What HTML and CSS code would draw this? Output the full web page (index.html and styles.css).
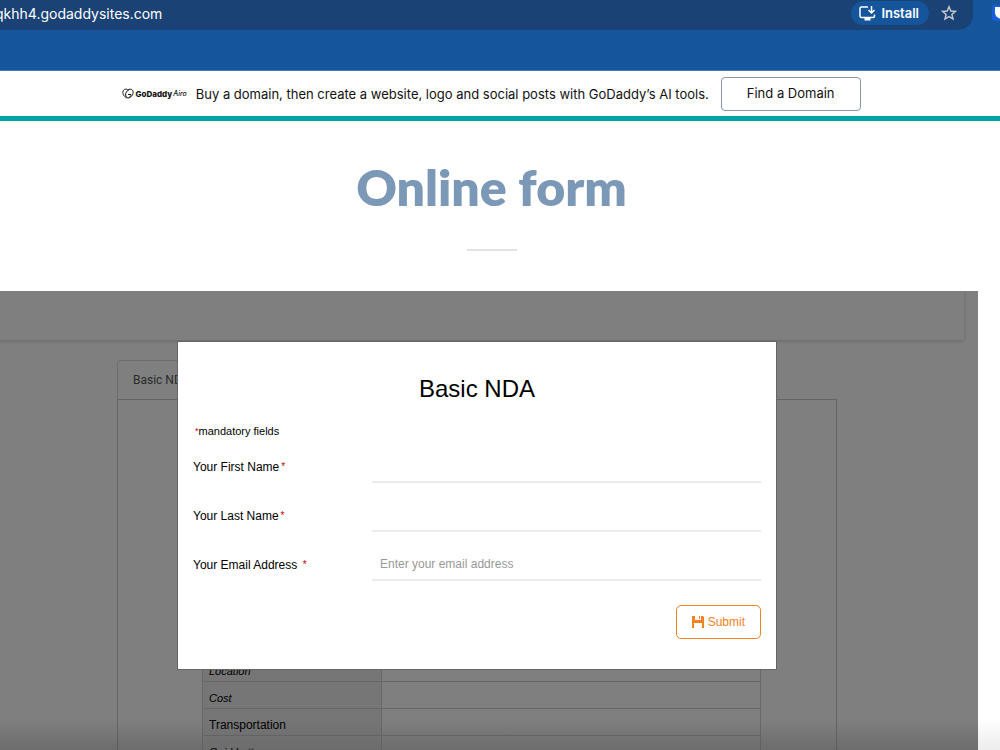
FILE: index.html
```html
<!DOCTYPE html>
<html lang="en">
<head>
    <meta charset="UTF-8">
    <meta name="viewport" content="width=device-width, initial-scale=1.0">
    <title>Online form</title>
    <link rel="stylesheet" href="styles.css">
</head>
<body>
    <header class="browser">
        <div class="address-bar">
            <span class="url">qkhh4.godaddysites.com</span>
            <button class="install" type="button">
                <svg width="17" height="16" viewBox="0 0 17 16" fill="none" stroke="currentColor" stroke-width="1.5">
                    <path d="M9 2H2.500Q1 2 1 3.500V11q0 1.500 1.500 1.500h11.500q1.500 0 1.500-1.500V9.500"/>
                    <path d="M5.500 14h6" stroke-width="3"/>
                    <path d="M12.500 1v7M9.500 5l3 3 3-3"/>
                </svg>
                Install
            </button>
            <button class="star" type="button" aria-label="Bookmark">
                <svg width="16" height="16" viewBox="0 0 16 16" fill="none" stroke="currentColor" stroke-width="1.5">
                    <path d="M8 1.8l1.8 4.2 4.6.4-3.5 3 1.1 4.5L8 11.5l-4 2.4 1.1-4.5-3.500-3L6.200 6z"/>
                </svg>
            </button>
        </div>
        <svg class="extension" width="18" height="16" viewBox="0 0 18 16">
            <rect width="18" height="16" rx="3" fill="#175ddc"/>
            <path d="M3 2h12v6c0 3-3 5-6 6-3-1-6-3-6-6z" fill="#fff"/>
            <path d="M9 4h4v4c0 2-2 3-4 4z" fill="#175ddc"/>
        </svg>
    </header>

    <div class="banner">
        <div class="brand">
            <svg width="12" height="11" viewBox="0 0 24 22" fill="none" stroke="#111" stroke-width="2">
                <path d="M12 20C5 19 1 13 2 7c1-5 6-6 10-3 4-3 9-2 10 3 1 6-3 12-10 13z"/>
                <path d="M9 18C5 13 8 6 15 3M12 13h6c0 3-2 5-4 6"/>
            </svg>
            <span class="brand-name">GoDaddy</span>
            <span class="brand-airo">Airo</span>
        </div>
        <p class="banner-text">Buy a domain, then create a website, logo and social posts with GoDaddy’s AI tools.</p>
        <a class="banner-link" href="#">Find a Domain</a>
    </div>

    <div class="hero">
        <h1>Online form</h1>
        <hr>
    </div>

    <main class="embed">
        <div class="toolbar"></div>
        <div class="document">
            <div class="tab">Basic NDA</div>
            <div class="sheet">
                <table>
                    <tr><th class="italic">Location</th><td></td></tr>
                    <tr><th class="italic">Cost</th><td></td></tr>
                    <tr><th>Transportation</th><td></td></tr>
                    <tr><th class="italic">Guid Letter</th><td></td></tr>
                </table>
            </div>
        </div>
        <div class="overlay">
            <form class="modal">
                <h2>Basic NDA</h2>
                <p class="note"><span class="required">*</span>mandatory fields</p>
                <div class="field">
                    <label for="first">Your First Name<span class="required">*</span></label>
                    <input type="text" id="first">
                </div>
                <div class="field">
                    <label for="last">Your Last Name<span class="required">*</span></label>
                    <input type="text" id="last">
                </div>
                <div class="field">
                    <label for="email">Your Email Address <span class="required">*</span></label>
                    <input type="email" id="email" placeholder="Enter your email address">
                </div>
                <div class="actions">
                    <button class="submit" type="submit">
                        <svg width="12" height="12" viewBox="0 0 12 12" fill="currentColor">
                            <path d="M0 0h3v4h6V0h2l1 1v11h-2V7H2v5H0zM7 0h1v3H7z"/>
                        </svg>
                        Submit
                    </button>
                </div>
            </form>
        </div>
    </main>
</body>
</html>
```

FILE: styles.css
```css
* {
    box-sizing: border-box;
}
body {
    margin: 0;
    height: 100vh;
    display: flex;
    flex-direction: column;
    overflow: hidden;
    background: linear-gradient(to top, #ececec, #fff 30px);
    color: #000;
    font-family: "Liberation Sans", Arial, sans-serif;
}
button {
    font-family: inherit;
    cursor: pointer;
}

/* browser bar */
.browser {
    display: flex;
    align-items: flex-start;
    gap: 19px;
    height: 71px;
    flex-shrink: 0;
    background: #15559b;
    border-bottom: 1px solid #4a7ab3;
    overflow: hidden;
}
.address-bar {
    flex: 1;
    display: flex;
    align-items: center;
    gap: 12px;
    height: 30px;
    padding: 0 16px 4px 0;
    background: #1b4275;
    border-radius: 0 0 15px 0;
    color: #fff;
}
.url {
    flex: 1;
    margin-left: -5px;
    font: 14px Inter, sans-serif;
}
.install {
    display: flex;
    align-items: center;
    gap: 5px;
    height: 24px;
    padding: 0 10px 0 8px;
    border: 0;
    border-radius: 12px;
    background: #15559b;
    color: #fff;
    font: 600 13px Inter, sans-serif;
}
.star {
    display: flex;
    padding: 0;
    border: 0;
    background: none;
    color: #c3c7cc;
}
.extension {
    flex-shrink: 0;
    margin: 5px -10px 0 0;
}

/* GoDaddy banner */
.banner {
    display: flex;
    align-items: center;
    justify-content: center;
    flex-shrink: 0;
    height: 50px;
    padding-right: 17px;
    border-bottom: 5px solid #00a4a6;
    font-family: Inter, sans-serif;
    font-size: 13px;
    line-height: 18px;
    color: #111;
}
.brand {
    display: flex;
    align-items: center;
    gap: 1px;
    margin-right: 9px;
    font: 800 7px Inter, sans-serif;
}
.brand-name {
    font-size: 8px;
}
.brand-airo {
    font-style: italic;
    font-weight: 500;
}
.banner-text {
    margin: 0 12px 0 0;
}
.banner-link {
    padding: 6px 25px 8px;
    border: 1px solid #8595ae;
    border-radius: 4px;
    color: #111;
    text-decoration: none;
}

/* title */
.hero {
    flex-shrink: 0;
    height: 170px;
    padding: 32px 17px 0 0;
    text-align: center;
}
.hero h1 {
    margin: 0;
    color: #7b98b7;
    font: 800 50px/68px Lato, sans-serif;
}
.hero hr {
    width: 50px;
    height: 2px;
    margin: 28px auto 0;
    border: 0;
    background: #e2e2e2;
}

/* embedded page behind the popup */
.embed {
    position: relative;
    flex: 1;
    min-height: 0;
    margin: 0 22px 0 -24px;
    overflow: hidden;
}
.toolbar {
    height: 49px;
    margin: 0 14px;
    box-shadow: 0 1px 4px #c8ccd2;
}
.document {
    width: 720px;
    margin: 20px auto 0;
}
.tab {
    width: 100px;
    height: 39px;
    padding: 0 15px;
    border: 1px solid #d8d8d8;
    border-bottom: 0;
    border-radius: 4px 4px 0 0;
    color: #555;
    font: 12px/38px Roboto, sans-serif;
}
.sheet {
    height: 500px;
    padding: 254px 75px 0 84px;
    border: 1px solid #c8c8c8;
}
table {
    width: 100%;
    border-collapse: collapse;
}
th,
td {
    height: 27px;
    padding: 6px 6px 0;
    border: 1px solid #d0d0d0;
}
th {
    width: 179px;
    background: #ececec;
    font-size: 12px;
    font-weight: normal;
    line-height: 16px;
    text-align: left;
}
th.italic {
    font-size: 11px;
    font-style: italic;
}
.overlay {
    position: absolute;
    inset: 0;
    padding-top: 51px;
    background: linear-gradient(to top, rgba(0, 0, 0, 0.54), rgba(0, 0, 0, 0.5) 30px);
}

/* popup form */
.modal {
    width: 598px;
    margin: 0 auto;
    padding: 31px 15px 30px;
    background: #fff;
    box-shadow: 0 0 0 1px #666;
}
.modal h2 {
    margin: 0;
    font-size: 24px;
    font-weight: normal;
    line-height: 32px;
    text-align: center;
}
.note {
    margin: 18px 0 11px 2px;
    font-size: 11px;
    line-height: 16px;
}
.required {
    color: #c00;
    font-size: 9px;
    vertical-align: 1px;
}
.field .required {
    margin-left: 2px;
    font-size: 10px;
}
.field {
    display: flex;
    height: 33px;
    margin-bottom: 16px;
}
.field label {
    width: 179px;
    font-size: 12px;
    line-height: 34px;
}
.field input {
    flex: 1;
    min-width: 0;
    padding: 0 8px;
    border: 0;
    border-bottom: 2px solid #ebebeb;
    outline: 0;
    font-family: inherit;
    font-size: 12px;
}
.field input::placeholder {
    color: #999;
}
.actions {
    display: flex;
    justify-content: flex-end;
    padding-top: 8px;
}
.submit {
    display: flex;
    align-items: center;
    gap: 4px;
    height: 34px;
    padding: 0 15px;
    border: 1px solid #f58220;
    border-radius: 5px;
    background: #fff;
    color: #f58220;
    font-size: 12px;
}
```
